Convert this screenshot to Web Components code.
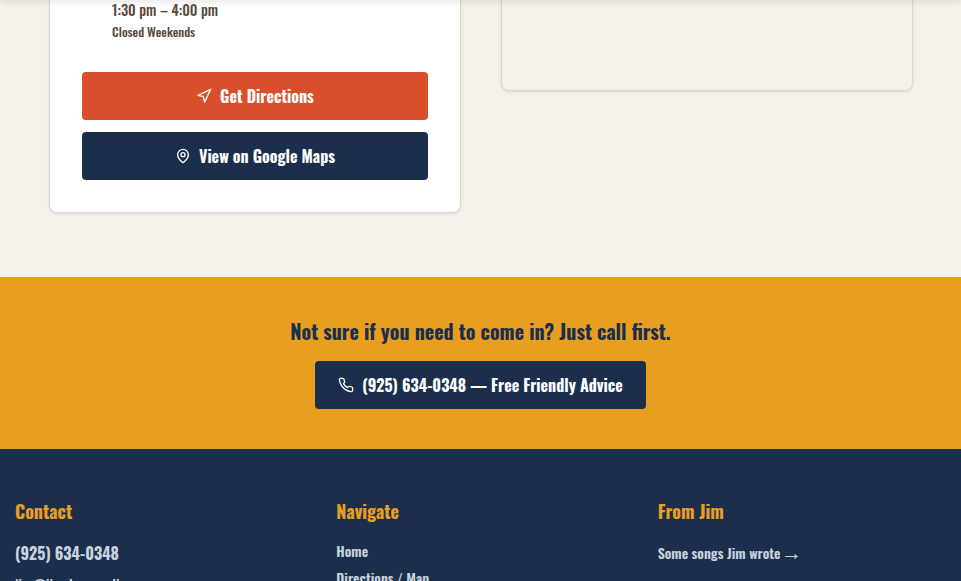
<!DOCTYPE html>
<html><head><meta charset="utf-8"><style>
html,body{margin:0;height:581px;overflow:hidden;background:#f5f2eb}
body{font-family:"Oswald","Roboto Condensed","Liberation Sans",sans-serif;font-weight:500}
</style></head><body>
<site-page></site-page>
<script>
const def=(n,css,html)=>customElements.define(n,class extends HTMLElement{constructor(){super();this.attachShadow({mode:'open'}).innerHTML=`<style>${css}</style>${html}`}});
const icons={nav:'<polygon points="3 11 22 2 13 21 11 13 3 11"/>',pin:'<path d="M20 10c0 6-8 12-8 12s-8-6-8-12a8 8 0 0 1 16 0Z"/><circle cx="12" cy="10" r="3"/>',phone:'<path d="M22 16.92v3a2 2 0 0 1-2.18 2 19.79 19.79 0 0 1-8.63-3.07 19.5 19.5 0 0 1-6-6 19.79 19.79 0 0 1-3.07-8.67A2 2 0 0 1 4.11 2h3a2 2 0 0 1 2 1.72 12.84 12.84 0 0 0 .7 2.81 2 2 0 0 1-.45 2.11L8.09 9.91a16 16 0 0 0 6 6l1.27-1.27a2 2 0 0 1 2.11-.45 12.84 12.84 0 0 0 2.81.7A2 2 0 0 1 22 16.92z"/>'};
customElements.define('ui-icon',class extends HTMLElement{constructor(){super();this.attachShadow({mode:'open'})}connectedCallback(){this.shadowRoot.innerHTML=`<style>:host{display:block;width:16px;height:16px}svg{display:block;width:100%;height:100%}</style><svg viewBox="0 0 24 24" fill="none" stroke="currentColor" stroke-width="2" stroke-linecap="round" stroke-linejoin="round">${icons[this.getAttribute('name')]}</svg>`}});
def('ui-button',`:host{display:flex;align-items:center;justify-content:center;gap:8px;height:48px;border-radius:4px;color:#fff;background:var(--bg,#1b2e4b);font-size:16px;font-weight:700;padding:0 var(--px,24px);white-space:nowrap}`,`<slot></slot>`);
def('ui-card',`:host{display:block;box-sizing:border-box;background:var(--bg,#fff);border:1px solid #dcd7ce;border-top:0;border-radius:0 0 8px 8px;box-shadow:0 1px 3px rgba(0,0,0,.1)}`,`<slot></slot>`);
def('hours-card',`:host{display:flex;flex-direction:column;gap:12px;padding:0 32px 32px;height:212px;box-sizing:border-box}
.t{padding-left:30px;color:#5a4a3f;height:60px}
.a{font-size:14.4px;font-weight:500;line-height:20px}.b{font-size:12.5px;font-weight:500;line-height:18px;margin-top:3px}`,
`<div class="t"><div class="a">1:30 pm – 4:00 pm</div><div class="b">Closed Weekends</div></div>
<ui-button style="--bg:#d94f2b"><ui-icon name="nav"></ui-icon><span>Get Directions</span></ui-button>
<ui-button><ui-icon name="pin"></ui-icon><span>View on Google Maps</span></ui-button>`);
def('call-band',`:host{display:flex;flex-direction:column;align-items:center;height:172px;box-sizing:border-box;background:#e89f20;padding-top:40px;color:#1b2e4b}
h2{margin:0;font-size:20px;line-height:28px;font-weight:700;margin-bottom:16px}`,
`<h2>Not sure if you need to come in? Just call first.</h2><ui-button style="--px:23.5px"><ui-icon name="phone"></ui-icon><span>(925) 634-0348 — Free Friendly Advice</span></ui-button>`);
def('site-footer',`:host{display:grid;grid-template-columns:repeat(3,1fr);column-gap:33px;background:#1b2e4b;padding:48px 15px 0;height:200px;box-sizing:border-box;color:#c9d3df}
h3{margin:0 0 15px;color:#e89f20;font-size:18px;line-height:28px;font-weight:700}
.p{font-size:16px;line-height:26px;font-weight:700}.m{font-size:14px;line-height:26px;font-weight:600}
.e{font-size:14.4px;font-weight:500;margin-top:6px}.n{margin-top:-2px}.n+.m{margin-top:1px}.g{margin-top:4px}
.ar{font-family:"Liberation Serif",serif;font-weight:400;font-size:21px;line-height:0;margin-left:-3px;position:relative;top:1px}`,
`<div><h3>Contact</h3><div class="p">(925) 634-0348</div><div class="m e">jim@jimsloanmedia.com</div></div>
<div><h3>Navigate</h3><div class="m n">Home</div><div class="m">Directions / Map</div></div>
<div><h3>From Jim</h3><div class="m g">Some songs Jim wrote <span class="ar">→</span></div></div>`);
def('site-page',`:host{display:block;position:relative;height:581px;overflow:hidden}
.top{display:grid;grid-template-columns:412px 412px;column-gap:40px;padding:0 48px 0 49px;height:277px;align-items:start}
.shade{position:absolute;left:0;right:0;top:-4px;height:4px;box-shadow:0 1px 6px rgba(0,0,0,.15)}`,
`<div class="top"><ui-card><hours-card></hours-card></ui-card><ui-card style="--bg:#f5f2eb;height:91px"></ui-card></div><call-band></call-band><site-footer></site-footer><div class="shade"></div>`);
</script></body></html>
